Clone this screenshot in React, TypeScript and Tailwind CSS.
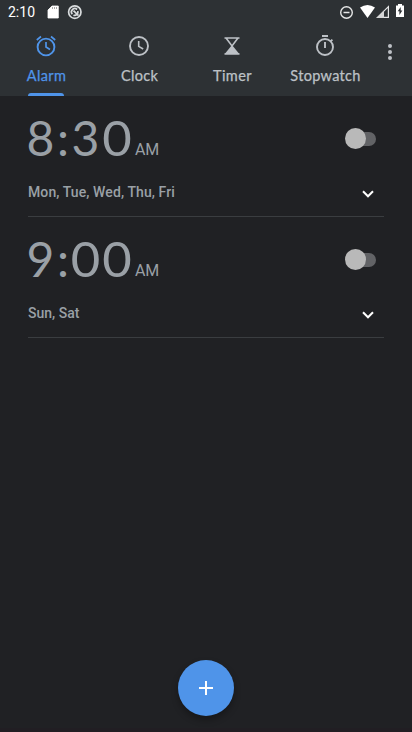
import type { ReactNode } from "react";

const sans = "font-['Roboto','Liberation_Sans',sans-serif]";

function Tab({ label, icon, active = false, spacing }: { label: string; icon: ReactNode; active?: boolean; spacing: string }) {
  return (
    <button className={`flex h-[72px] w-[93px] shrink-0 flex-col items-center pt-[10px] ${active ? "text-[#4f94e9]" : "text-[#bdc1c6]"}`}>
      <svg className="size-6 shrink-0" viewBox="0 0 24 24" fill="none" stroke="currentColor" strokeWidth="1.9">{icon}</svg>
      <span className={`mt-[8px] h-5 pl-[2px] font-['Lato','Liberation_Sans',sans-serif] text-[14.5px] leading-5 whitespace-nowrap [-webkit-text-stroke:0.25px_currentColor] ${spacing}`}>{label}</span>
      <span className={`mt-[7px] h-[3px] w-9 rounded-t-[3px] ${active ? "bg-[#4f94e9]" : "bg-transparent"}`} />
    </button>
  );
}

function Alarm({ time, days }: { time: string; days: string }) {
  const widths = ["w-[33px]", "w-3", "w-[33px]", "w-[30px]"];
  return (
    <section className="mx-7 flex h-[121px] flex-col border-b border-[#3a3d40] text-[#9aa0a6]">
      <div className="flex h-[84px] items-center justify-between">
        <div className="flex items-baseline">
          <div className="-ml-1 flex font-['Lato','Liberation_Sans',sans-serif] text-[48px] leading-[60px]">
            {time.split("").map((c, i) => (
              <span key={i} className={`flex justify-center ${widths[i]} ${c === "0" ? "scale-x-106" : ""}`}>{c}</span>
            ))}
          </div>
          <span className={`relative -top-px ml-[3px] text-base tracking-[-.2px] ${sans}`}>AM</span>
        </div>
        <button className="relative mt-px mr-2 h-[14px] w-[29px] rounded-full bg-[#626366]">
          <span className="absolute -left-[2px] -top-[3.5px] size-[20.5px] rounded-full bg-[#b9b9b9]" />
        </button>
      </div>
      <div className="flex h-6 items-center justify-between">
        <span className={`text-sm font-medium ${days.length > 10 ? "tracking-[.1px]" : ""} ${sans}`}>{days}</span>
        <svg className="mr-[10px] mt-[3px] h-2 w-3" viewBox="0 0 12 8" fill="none" stroke="#fff" strokeWidth="2"><path d="m1 1.3 5 5 5-5" /></svg>
      </div>
    </section>
  );
}

export default function App() {
  return (
    <main className="flex h-[732px] w-[412px] flex-col overflow-hidden bg-[#202124]">
      <header className="h-24 bg-[#2d3134]">
        <div className={`flex h-6 items-center pl-2 text-white ${sans}`}>
          <span className="w-[38px] text-sm leading-6">2:10</span>
          <svg width="42" height="24" viewBox="46 0 42 24" fill="none">
            <path d="M52 6h6.3v12H48V10z" fill="#fff" stroke="#fff" strokeWidth=".8" strokeLinejoin="round" /><path d="M52.5 7v2m2-2v2m2-2v2" stroke="#aaa" />
            <circle cx="74.8" cy="12.1" r="6.2" stroke="#d9dcde" strokeWidth="1.7" /><path d="M72.3 14.3a3.4 3.4 0 0 1 4.8-4.8M77.8 11a3.4 3.4 0 0 1-4.4 4.2M73.5 10.7l5 5" stroke="#d9dcde" strokeWidth="1.7" />
          </svg>
          <svg className="ml-auto mr-2" width="66" height="24" viewBox="338 0 66 24" fill="none">
            <circle cx="346.5" cy="12.5" r="5.8" stroke="#e6e7e7" strokeWidth="1.4" /><path d="M343.5 12.5h6" stroke="#e6e7e7" strokeWidth="1.5" />
            <path d="M360 7.5q7.5-5 15 0L367.5 18z" fill="#fff" />
            <path d="M377.5 17.4 388.4 6.6V17.4z" stroke="#e5e6e7" strokeWidth="1.2" /><path d="M376.5 18 384 10.5V18z" fill="#d5d6d7" />
            <path d="M396 5.5h2V4h4v1.5h2V17h-8z" fill="#fff" /><path d="m400.7 7-3 4.2h1.7v3.8l3-4.5h-1.7z" fill="#2d3134" />
          </svg>
        </div>
        <nav className="-ml-px flex">
          <Tab active label="Alarm" spacing="tracking-[.35px]" icon={<><circle cx="12" cy="13" r="8.4" /><path d="M12 8v5l4 2.5M2.8 6 7 2.5M17 2.5 21.2 6" strokeWidth="1.7" /></>} />
          <Tab label="Clock" spacing="tracking-[.3px]" icon={<><circle cx="12" cy="12" r="9" /><path d="M11.7 7v5.4l4.5 2.6" strokeWidth="1.6" /></>} />
          <Tab label="Timer" spacing="tracking-[.4px]" icon={<><path d="M4.5 4h15M4.5 20h15M6 4l6 8 6-8" strokeWidth="1.6" /><path d="m12 11 7.3 9H4.7z" fill="currentColor" stroke="none" /></>} />
          <Tab label="Stopwatch" spacing="tracking-[.3px]" icon={<><circle cx="12" cy="13" r="8" /><path d="M9 2h6M12 8v6M17.6 7.4l1.8-1.8" /></>} />
          <button className="ml-px flex w-[35px] flex-col items-center gap-[2px] pt-5">
            {[0, 1, 2].map(i => <i key={i} className="size-1 rounded-full bg-[#bdc1c6]" />)}
          </button>
        </nav>
      </header>
      <Alarm time="8:30" days="Mon, Tue, Wed, Thu, Fri" />
      <Alarm time="9:00" days="Sun, Sat" />
      <button className="mt-auto mb-4 flex size-14 shrink-0 items-center justify-center self-center rounded-full bg-[#4f94e9] shadow-[0_4px_7px_rgba(0,0,0,.3)]">
        <svg className="size-[14px]" viewBox="0 0 14 14" stroke="#fff" strokeWidth="2"><path d="M0 7h14M7 0v14" /></svg>
      </button>
      <div className="-mt-1 h-1 w-full shrink-0 bg-[#211e23]" />
    </main>
  );
}
